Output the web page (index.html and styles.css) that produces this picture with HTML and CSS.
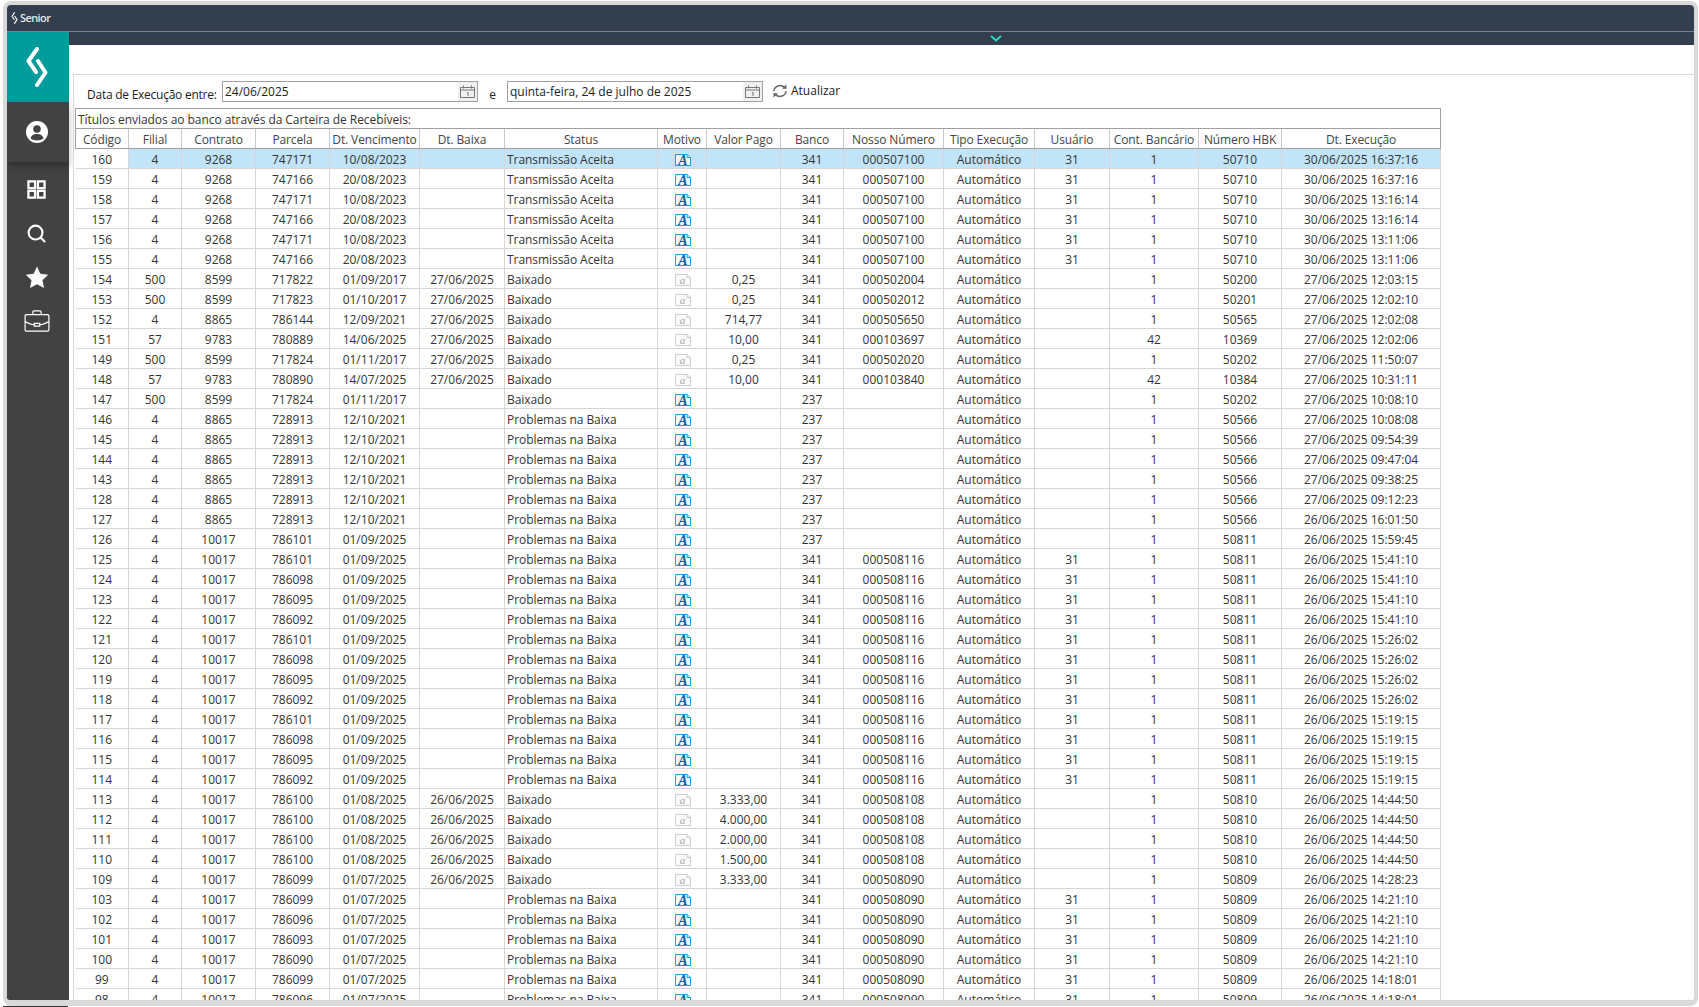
FILE: index.html
```html
<!DOCTYPE html>
<html>
<head>
	<meta charset="UTF-8">
	<title>Senior</title>
	<link rel="stylesheet" href="styles.css">
</head>
<body>
<svg class="defs" width="0" height="0">
	<symbol id="ia" viewBox="0 0 16 12">
		<path d="M.5.5h11.500l3.500 3v8H.5z" fill="#f2f9ff" stroke="#1c9be8"/>
		<path d="M12 .5v3h3.500" fill="#cfe8fb" stroke="#1c9be8"/>
		<text class="ic-a" x="8" y="10.500" text-anchor="middle">A</text>
	</symbol>
	<symbol id="ib" viewBox="0 0 16 12">
		<path d="M.5.5h11.500l3.500 3v8H.5z" fill="#fbfbfb" stroke="#cfcfcf"/>
		<path d="M12 .5v3h3.500" fill="#eee" stroke="#cfcfcf"/>
		<text class="ic-b" x="7.500" y="9.500" text-anchor="middle">a</text>
	</symbol>
	<symbol id="ical" viewBox="0 0 15 13">
		<path d="M.5 2.500h14v10H.5zM.5 5h14M3.500.5v3M11.500.5v3M7 7.500h1v3.500" fill="none" stroke="#777"/>
	</symbol>
</svg>
<div class="window">
	<div class="titlebar">
		<svg class="title-logo" viewBox="0 0 22 40"><path d="M11 2 2.500 14 10 25M12 14l7.500 11.500L11 38" fill="none" stroke="#fff" stroke-width="3.600" stroke-linecap="round" stroke-linejoin="round"/></svg>
		<span>Senior</span>
	</div>
	<div class="main">
		<div class="sidebar">
			<div class="brand">
				<svg width="22" height="40" viewBox="0 0 22 40"><path d="M11 2 2.500 14 10 25M12 14l7.500 11.500L11 38" fill="none" stroke="#fff" stroke-width="4" stroke-linecap="round" stroke-linejoin="round"/></svg>
			</div>
			<div class="user">
				<svg width="22" height="22" viewBox="0 0 22 22"><circle cx="11" cy="11" r="11" fill="#fff"/><circle cx="11" cy="8" r="3.800" fill="#424242"/><path d="M4.500 17.500c1-3.500 3.500-4.500 6.500-4.500s5.500 1 6.500 4.500c-3.500 2.500-9.500 2.500-13 0z" fill="#424242"/></svg>
			</div>
			<div class="side-menu">
				<div class="side-item"><svg width="19" height="19" viewBox="0 0 20 20"><path d="M1.500 1.500h7v7h-7zM11.500 1.500h7v7h-7zM1.500 11.500h7v7h-7zM11.500 11.500h7v7h-7z" fill="none" stroke="#fff" stroke-width="2.400"/></svg></div>
				<div class="side-item"><svg width="19" height="19" viewBox="0 0 20 20"><circle cx="9" cy="9" r="7.300" fill="none" stroke="#fff" stroke-width="2.200"/><path d="m14 14 5 5" stroke="#fff" stroke-width="2.400"/></svg></div>
				<div class="side-item"><svg width="24" height="23" viewBox="0 0 24 24"><path d="m12 .5 3.500 7.600 8.200 1-6 5.700 1.600 8.200-7.300-4-7.300 4 1.600-8.200-6-5.700 8.200-1z" fill="#fff"/></svg></div>
				<div class="side-item"><svg width="26" height="22" viewBox="0 0 28 24"><path d="M2.500 5h23q1.500 0 1.500 1.500v15q0 1.500-1.500 1.500h-23Q1 23 1 21.500v-15Q1 5 2.500 5zM1 12.500q6 3.500 10 3.500M27 12.500q-6 3.500-10 3.500M9.500 5V2.500q0-1.500 1.500-1.500h6q1.500 0 1.500 1.500V5M11 14.500h6v3h-6z" fill="none" stroke="#fff" stroke-width="1.300"/></svg></div>
			</div>
		</div>
		<div class="page">
			<div class="topband"><svg width="12" height="7" viewBox="0 0 12 7"><path d="m1 1 5 4.500L11 1" fill="none" stroke="#1fe3c4" stroke-width="1.700"/></svg></div>
			<div class="spacer"></div>
			<div class="panel">
				<div class="filters">
					<label class="lbl-date">Data de Execução entre:</label>
					<div class="datebox"><span>24/06/2025</span><i class="cal"><svg width="15" height="13"><use href="#ical"/></svg></i></div>
					<span class="lbl-e">e</span>
					<div class="datebox"><span>quinta-feira, 24 de julho de 2025</span><i class="cal"><svg width="15" height="13"><use href="#ical"/></svg></i></div>
					<div class="refresh">
						<svg width="16" height="14" viewBox="0 0 16 14"><path d="M2 7a6 5.500 0 0 1 10.500-3.500M14 7a6 5.500 0 0 1-10.500 3.500" fill="none" stroke="#666" stroke-width="1.500"/><path d="m10 4.500 4.500.5V.5zM6 9.500 1.500 9v4.500z" fill="#666"/></svg>
						<span>Atualizar</span>
					</div>
				</div>
				<div class="grid-wrap">
					<table class="grid">
						<colgroup>
							<col class="c1"><col class="c2"><col class="c3"><col class="c4"><col class="c5"><col class="c6"><col class="c7"><col class="c8"><col class="c9"><col class="c10"><col class="c11"><col class="c12"><col class="c13"><col class="c14"><col class="c15"><col class="c16">
						</colgroup>
						<thead>
							<tr class="cap"><th colspan="16">Títulos enviados ao banco através da Carteira de Recebíveis:</th></tr>
							<tr class="head"><th>Código</th><th>Filial</th><th>Contrato</th><th>Parcela</th><th>Dt. Vencimento</th><th>Dt. Baixa</th><th>Status</th><th>Motivo</th><th>Valor Pago</th><th>Banco</th><th>Nosso Número</th><th>Tipo Execução</th><th>Usuário</th><th>Cont. Bancário</th><th>Número HBK</th><th>Dt. Execução</th></tr>
						</thead>
						<tbody>
							<tr class="sel"><td class="first">160</td><td>4</td><td>9268</td><td>747171</td><td>10/08/2023</td><td></td><td class="st">Transmissão Aceita</td><td><svg class="ic"><use href="#ia"/></svg></td><td></td><td>341</td><td>000507100</td><td>Automático</td><td>31</td><td>1</td><td>50710</td><td>30/06/2025 16:37:16</td></tr>
							<tr><td>159</td><td>4</td><td>9268</td><td>747166</td><td>20/08/2023</td><td></td><td class="st">Transmissão Aceita</td><td><svg class="ic"><use href="#ia"/></svg></td><td></td><td>341</td><td>000507100</td><td>Automático</td><td>31</td><td>1</td><td>50710</td><td>30/06/2025 16:37:16</td></tr>
							<tr><td>158</td><td>4</td><td>9268</td><td>747171</td><td>10/08/2023</td><td></td><td class="st">Transmissão Aceita</td><td><svg class="ic"><use href="#ia"/></svg></td><td></td><td>341</td><td>000507100</td><td>Automático</td><td>31</td><td>1</td><td>50710</td><td>30/06/2025 13:16:14</td></tr>
							<tr><td>157</td><td>4</td><td>9268</td><td>747166</td><td>20/08/2023</td><td></td><td class="st">Transmissão Aceita</td><td><svg class="ic"><use href="#ia"/></svg></td><td></td><td>341</td><td>000507100</td><td>Automático</td><td>31</td><td>1</td><td>50710</td><td>30/06/2025 13:16:14</td></tr>
							<tr><td>156</td><td>4</td><td>9268</td><td>747171</td><td>10/08/2023</td><td></td><td class="st">Transmissão Aceita</td><td><svg class="ic"><use href="#ia"/></svg></td><td></td><td>341</td><td>000507100</td><td>Automático</td><td>31</td><td>1</td><td>50710</td><td>30/06/2025 13:11:06</td></tr>
							<tr><td>155</td><td>4</td><td>9268</td><td>747166</td><td>20/08/2023</td><td></td><td class="st">Transmissão Aceita</td><td><svg class="ic"><use href="#ia"/></svg></td><td></td><td>341</td><td>000507100</td><td>Automático</td><td>31</td><td>1</td><td>50710</td><td>30/06/2025 13:11:06</td></tr>
							<tr><td>154</td><td>500</td><td>8599</td><td>717822</td><td>01/09/2017</td><td>27/06/2025</td><td class="st">Baixado</td><td><svg class="ic"><use href="#ib"/></svg></td><td>0,25</td><td>341</td><td>000502004</td><td>Automático</td><td></td><td>1</td><td>50200</td><td>27/06/2025 12:03:15</td></tr>
							<tr><td>153</td><td>500</td><td>8599</td><td>717823</td><td>01/10/2017</td><td>27/06/2025</td><td class="st">Baixado</td><td><svg class="ic"><use href="#ib"/></svg></td><td>0,25</td><td>341</td><td>000502012</td><td>Automático</td><td></td><td>1</td><td>50201</td><td>27/06/2025 12:02:10</td></tr>
							<tr><td>152</td><td>4</td><td>8865</td><td>786144</td><td>12/09/2021</td><td>27/06/2025</td><td class="st">Baixado</td><td><svg class="ic"><use href="#ib"/></svg></td><td>714,77</td><td>341</td><td>000505650</td><td>Automático</td><td></td><td>1</td><td>50565</td><td>27/06/2025 12:02:08</td></tr>
							<tr><td>151</td><td>57</td><td>9783</td><td>780889</td><td>14/06/2025</td><td>27/06/2025</td><td class="st">Baixado</td><td><svg class="ic"><use href="#ib"/></svg></td><td>10,00</td><td>341</td><td>000103697</td><td>Automático</td><td></td><td>42</td><td>10369</td><td>27/06/2025 12:02:06</td></tr>
							<tr><td>149</td><td>500</td><td>8599</td><td>717824</td><td>01/11/2017</td><td>27/06/2025</td><td class="st">Baixado</td><td><svg class="ic"><use href="#ib"/></svg></td><td>0,25</td><td>341</td><td>000502020</td><td>Automático</td><td></td><td>1</td><td>50202</td><td>27/06/2025 11:50:07</td></tr>
							<tr><td>148</td><td>57</td><td>9783</td><td>780890</td><td>14/07/2025</td><td>27/06/2025</td><td class="st">Baixado</td><td><svg class="ic"><use href="#ib"/></svg></td><td>10,00</td><td>341</td><td>000103840</td><td>Automático</td><td></td><td>42</td><td>10384</td><td>27/06/2025 10:31:11</td></tr>
							<tr><td>147</td><td>500</td><td>8599</td><td>717824</td><td>01/11/2017</td><td></td><td class="st">Baixado</td><td><svg class="ic"><use href="#ia"/></svg></td><td></td><td>237</td><td></td><td>Automático</td><td></td><td>1</td><td>50202</td><td>27/06/2025 10:08:10</td></tr>
							<tr><td>146</td><td>4</td><td>8865</td><td>728913</td><td>12/10/2021</td><td></td><td class="st">Problemas na Baixa</td><td><svg class="ic"><use href="#ia"/></svg></td><td></td><td>237</td><td></td><td>Automático</td><td></td><td>1</td><td>50566</td><td>27/06/2025 10:08:08</td></tr>
							<tr><td>145</td><td>4</td><td>8865</td><td>728913</td><td>12/10/2021</td><td></td><td class="st">Problemas na Baixa</td><td><svg class="ic"><use href="#ia"/></svg></td><td></td><td>237</td><td></td><td>Automático</td><td></td><td>1</td><td>50566</td><td>27/06/2025 09:54:39</td></tr>
							<tr><td>144</td><td>4</td><td>8865</td><td>728913</td><td>12/10/2021</td><td></td><td class="st">Problemas na Baixa</td><td><svg class="ic"><use href="#ia"/></svg></td><td></td><td>237</td><td></td><td>Automático</td><td></td><td>1</td><td>50566</td><td>27/06/2025 09:47:04</td></tr>
							<tr><td>143</td><td>4</td><td>8865</td><td>728913</td><td>12/10/2021</td><td></td><td class="st">Problemas na Baixa</td><td><svg class="ic"><use href="#ia"/></svg></td><td></td><td>237</td><td></td><td>Automático</td><td></td><td>1</td><td>50566</td><td>27/06/2025 09:38:25</td></tr>
							<tr><td>128</td><td>4</td><td>8865</td><td>728913</td><td>12/10/2021</td><td></td><td class="st">Problemas na Baixa</td><td><svg class="ic"><use href="#ia"/></svg></td><td></td><td>237</td><td></td><td>Automático</td><td></td><td>1</td><td>50566</td><td>27/06/2025 09:12:23</td></tr>
							<tr><td>127</td><td>4</td><td>8865</td><td>728913</td><td>12/10/2021</td><td></td><td class="st">Problemas na Baixa</td><td><svg class="ic"><use href="#ia"/></svg></td><td></td><td>237</td><td></td><td>Automático</td><td></td><td>1</td><td>50566</td><td>26/06/2025 16:01:50</td></tr>
							<tr><td>126</td><td>4</td><td>10017</td><td>786101</td><td>01/09/2025</td><td></td><td class="st">Problemas na Baixa</td><td><svg class="ic"><use href="#ia"/></svg></td><td></td><td>237</td><td></td><td>Automático</td><td></td><td>1</td><td>50811</td><td>26/06/2025 15:59:45</td></tr>
							<tr><td>125</td><td>4</td><td>10017</td><td>786101</td><td>01/09/2025</td><td></td><td class="st">Problemas na Baixa</td><td><svg class="ic"><use href="#ia"/></svg></td><td></td><td>341</td><td>000508116</td><td>Automático</td><td>31</td><td>1</td><td>50811</td><td>26/06/2025 15:41:10</td></tr>
							<tr><td>124</td><td>4</td><td>10017</td><td>786098</td><td>01/09/2025</td><td></td><td class="st">Problemas na Baixa</td><td><svg class="ic"><use href="#ia"/></svg></td><td></td><td>341</td><td>000508116</td><td>Automático</td><td>31</td><td>1</td><td>50811</td><td>26/06/2025 15:41:10</td></tr>
							<tr><td>123</td><td>4</td><td>10017</td><td>786095</td><td>01/09/2025</td><td></td><td class="st">Problemas na Baixa</td><td><svg class="ic"><use href="#ia"/></svg></td><td></td><td>341</td><td>000508116</td><td>Automático</td><td>31</td><td>1</td><td>50811</td><td>26/06/2025 15:41:10</td></tr>
							<tr><td>122</td><td>4</td><td>10017</td><td>786092</td><td>01/09/2025</td><td></td><td class="st">Problemas na Baixa</td><td><svg class="ic"><use href="#ia"/></svg></td><td></td><td>341</td><td>000508116</td><td>Automático</td><td>31</td><td>1</td><td>50811</td><td>26/06/2025 15:41:10</td></tr>
							<tr><td>121</td><td>4</td><td>10017</td><td>786101</td><td>01/09/2025</td><td></td><td class="st">Problemas na Baixa</td><td><svg class="ic"><use href="#ia"/></svg></td><td></td><td>341</td><td>000508116</td><td>Automático</td><td>31</td><td>1</td><td>50811</td><td>26/06/2025 15:26:02</td></tr>
							<tr><td>120</td><td>4</td><td>10017</td><td>786098</td><td>01/09/2025</td><td></td><td class="st">Problemas na Baixa</td><td><svg class="ic"><use href="#ia"/></svg></td><td></td><td>341</td><td>000508116</td><td>Automático</td><td>31</td><td>1</td><td>50811</td><td>26/06/2025 15:26:02</td></tr>
							<tr><td>119</td><td>4</td><td>10017</td><td>786095</td><td>01/09/2025</td><td></td><td class="st">Problemas na Baixa</td><td><svg class="ic"><use href="#ia"/></svg></td><td></td><td>341</td><td>000508116</td><td>Automático</td><td>31</td><td>1</td><td>50811</td><td>26/06/2025 15:26:02</td></tr>
							<tr><td>118</td><td>4</td><td>10017</td><td>786092</td><td>01/09/2025</td><td></td><td class="st">Problemas na Baixa</td><td><svg class="ic"><use href="#ia"/></svg></td><td></td><td>341</td><td>000508116</td><td>Automático</td><td>31</td><td>1</td><td>50811</td><td>26/06/2025 15:26:02</td></tr>
							<tr><td>117</td><td>4</td><td>10017</td><td>786101</td><td>01/09/2025</td><td></td><td class="st">Problemas na Baixa</td><td><svg class="ic"><use href="#ia"/></svg></td><td></td><td>341</td><td>000508116</td><td>Automático</td><td>31</td><td>1</td><td>50811</td><td>26/06/2025 15:19:15</td></tr>
							<tr><td>116</td><td>4</td><td>10017</td><td>786098</td><td>01/09/2025</td><td></td><td class="st">Problemas na Baixa</td><td><svg class="ic"><use href="#ia"/></svg></td><td></td><td>341</td><td>000508116</td><td>Automático</td><td>31</td><td>1</td><td>50811</td><td>26/06/2025 15:19:15</td></tr>
							<tr><td>115</td><td>4</td><td>10017</td><td>786095</td><td>01/09/2025</td><td></td><td class="st">Problemas na Baixa</td><td><svg class="ic"><use href="#ia"/></svg></td><td></td><td>341</td><td>000508116</td><td>Automático</td><td>31</td><td>1</td><td>50811</td><td>26/06/2025 15:19:15</td></tr>
							<tr><td>114</td><td>4</td><td>10017</td><td>786092</td><td>01/09/2025</td><td></td><td class="st">Problemas na Baixa</td><td><svg class="ic"><use href="#ia"/></svg></td><td></td><td>341</td><td>000508116</td><td>Automático</td><td>31</td><td>1</td><td>50811</td><td>26/06/2025 15:19:15</td></tr>
							<tr><td>113</td><td>4</td><td>10017</td><td>786100</td><td>01/08/2025</td><td>26/06/2025</td><td class="st">Baixado</td><td><svg class="ic"><use href="#ib"/></svg></td><td>3.333,00</td><td>341</td><td>000508108</td><td>Automático</td><td></td><td>1</td><td>50810</td><td>26/06/2025 14:44:50</td></tr>
							<tr><td>112</td><td>4</td><td>10017</td><td>786100</td><td>01/08/2025</td><td>26/06/2025</td><td class="st">Baixado</td><td><svg class="ic"><use href="#ib"/></svg></td><td>4.000,00</td><td>341</td><td>000508108</td><td>Automático</td><td></td><td>1</td><td>50810</td><td>26/06/2025 14:44:50</td></tr>
							<tr><td>111</td><td>4</td><td>10017</td><td>786100</td><td>01/08/2025</td><td>26/06/2025</td><td class="st">Baixado</td><td><svg class="ic"><use href="#ib"/></svg></td><td>2.000,00</td><td>341</td><td>000508108</td><td>Automático</td><td></td><td>1</td><td>50810</td><td>26/06/2025 14:44:50</td></tr>
							<tr><td>110</td><td>4</td><td>10017</td><td>786100</td><td>01/08/2025</td><td>26/06/2025</td><td class="st">Baixado</td><td><svg class="ic"><use href="#ib"/></svg></td><td>1.500,00</td><td>341</td><td>000508108</td><td>Automático</td><td></td><td>1</td><td>50810</td><td>26/06/2025 14:44:50</td></tr>
							<tr><td>109</td><td>4</td><td>10017</td><td>786099</td><td>01/07/2025</td><td>26/06/2025</td><td class="st">Baixado</td><td><svg class="ic"><use href="#ib"/></svg></td><td>3.333,00</td><td>341</td><td>000508090</td><td>Automático</td><td></td><td>1</td><td>50809</td><td>26/06/2025 14:28:23</td></tr>
							<tr><td>103</td><td>4</td><td>10017</td><td>786099</td><td>01/07/2025</td><td></td><td class="st">Problemas na Baixa</td><td><svg class="ic"><use href="#ia"/></svg></td><td></td><td>341</td><td>000508090</td><td>Automático</td><td>31</td><td>1</td><td>50809</td><td>26/06/2025 14:21:10</td></tr>
							<tr><td>102</td><td>4</td><td>10017</td><td>786096</td><td>01/07/2025</td><td></td><td class="st">Problemas na Baixa</td><td><svg class="ic"><use href="#ia"/></svg></td><td></td><td>341</td><td>000508090</td><td>Automático</td><td>31</td><td>1</td><td>50809</td><td>26/06/2025 14:21:10</td></tr>
							<tr><td>101</td><td>4</td><td>10017</td><td>786093</td><td>01/07/2025</td><td></td><td class="st">Problemas na Baixa</td><td><svg class="ic"><use href="#ia"/></svg></td><td></td><td>341</td><td>000508090</td><td>Automático</td><td>31</td><td>1</td><td>50809</td><td>26/06/2025 14:21:10</td></tr>
							<tr><td>100</td><td>4</td><td>10017</td><td>786090</td><td>01/07/2025</td><td></td><td class="st">Problemas na Baixa</td><td><svg class="ic"><use href="#ia"/></svg></td><td></td><td>341</td><td>000508090</td><td>Automático</td><td>31</td><td>1</td><td>50809</td><td>26/06/2025 14:21:10</td></tr>
							<tr><td>99</td><td>4</td><td>10017</td><td>786099</td><td>01/07/2025</td><td></td><td class="st">Problemas na Baixa</td><td><svg class="ic"><use href="#ia"/></svg></td><td></td><td>341</td><td>000508090</td><td>Automático</td><td>31</td><td>1</td><td>50809</td><td>26/06/2025 14:18:01</td></tr>
							<tr><td>98</td><td>4</td><td>10017</td><td>786096</td><td>01/07/2025</td><td></td><td class="st">Problemas na Baixa</td><td><svg class="ic"><use href="#ia"/></svg></td><td></td><td>341</td><td>000508090</td><td>Automático</td><td>31</td><td>1</td><td>50809</td><td>26/06/2025 14:18:01</td></tr>
						</tbody>
					</table>
				</div>
			</div>
		</div>
	</div>
</div>
<div class="under"></div>
</body>
</html>
```
FILE: styles.css
```css
*{margin:0;padding:0;box-sizing:border-box;}
html,body{height:100%;overflow:hidden;background:#fff;}
body{
	font-family:"Open Sans","Noto Sans",sans-serif;
	font-size:12px;
	color:#333;
	padding:1px 1px 0 3px;
}
.defs{display:block;height:0;}
.window{
	height:1005px;
	border:solid #d9d9d9;
	border-width:4px 4px 6px 4px;
	border-radius:8px;
	background:#fff;
	overflow:hidden;
	display:flex;
	flex-direction:column;
}
.under{width:65px;height:1px;background:#333;}
.titlebar{
	height:27px;
	flex:none;
	background:#333f4f;
	border-bottom:1px solid #77808a;
	color:#e4e7ea;
	font-size:11px;
	font-weight:600;
	letter-spacing:-.6px;
	display:flex;
	align-items:center;
	gap:2px;
	padding:0 0 1px 4px;
}
.title-logo{width:7px;height:12px;}
.main{flex:1;display:flex;min-height:0;}
.sidebar{width:62px;flex:none;background:#424242;}
.brand{
	height:70px;
	background:#009b9b;
	padding-right:3px;
	display:flex;
	align-items:center;
	justify-content:center;
}
.user{
	height:60px;
	padding-right:3px;
	display:flex;
	align-items:center;
	justify-content:center;
	box-shadow:0 4px 6px rgba(0,0,0,.28);
}
.side-menu{padding:5px 3px 0 0;}
.side-item{
	height:44px;
	display:flex;
	align-items:center;
	justify-content:center;
}
.page{flex:1;min-width:0;display:flex;flex-direction:column;}
.topband{
	height:13px;
	flex:none;
	background:#333f4f;
	display:flex;
	justify-content:center;
	align-items:center;
	padding-left:229px;
}
.spacer{height:29px;flex:none;}
.panel{
	flex:1;
	min-height:0;
	margin-left:4px;
	border-top:1px solid #d9d9d9;
	border-left:1px solid #d9d9d9;
	padding-left:1px;
	overflow:hidden;
}
.filters{
	height:33px;
	display:flex;
	align-items:flex-start;
	padding-top:6px;
	color:#222;
}
.lbl-date{margin:5px 0 0 12px;width:135px;letter-spacing:-.25px;white-space:nowrap;}
.datebox{
	width:256px;
	height:21px;
	border:1px solid #a0a0a0;
	padding-left:2px;
	display:flex;
	justify-content:space-between;
	align-items:center;
	line-height:17px;
}
.cal{
	width:19px;
	height:19px;
	background:#f0f0f0;
	display:flex;
	align-items:center;
	justify-content:center;
}
.cal svg{display:block;}
.lbl-e{width:29px;text-align:center;margin-top:5px;}
.refresh{
	display:flex;
	align-items:center;
	gap:3px;
	margin-left:9px;
	height:19px;
}
.grid{
	width:1366px;
	table-layout:fixed;
	border-collapse:collapse;
}
.c1{width:53px;}
.c2{width:53px;}
.c3{width:74px;}
.c4{width:74px;}
.c5{width:90px;}
.c6{width:85px;}
.c7{width:153px;}
.c8{width:49px;}
.c9{width:74px;}
.c10{width:63px;}
.c11{width:100px;}
.c12{width:91px;}
.c13{width:75px;}
.c14{width:89px;}
.c15{width:83px;}
.c16{width:159px;}
.grid th,.grid td{
	height:20px;
	font-weight:400;
	text-align:center;
	white-space:nowrap;
	overflow:hidden;
	line-height:17px;
	padding-top:2px;
	color:#333;
}
.cap th{
	text-align:left;
	padding-left:2px;
	border:1px solid #a0a0a0;
	letter-spacing:-.05px;
}
.head th{
	border:1px solid #c8c8c8;
	border-bottom:1px solid #a0a0a0;
	color:#444;
	letter-spacing:-.12px;
}
.head th:first-child{border-left-color:#a0a0a0;}
.head th:last-child{border-right-color:#a0a0a0;}
.grid td{
	border-right:1px solid #d6d6d6;
	border-bottom:1px solid #d6d6d6;
}
.grid td.st{text-align:left;padding-left:2px;letter-spacing:-.06px;}
.sel td{background:#c1e4f8;}
.sel td.first{background:#fff;}
.ic{width:16px;height:12px;display:block;margin:0 0 0 17px;}
.ic-a{font:italic 700 14px "Liberation Serif",serif;fill:#0f5ea8;}
.ic-b{font:italic 400 11px "Liberation Serif",serif;fill:#a0a0a0;}
```
